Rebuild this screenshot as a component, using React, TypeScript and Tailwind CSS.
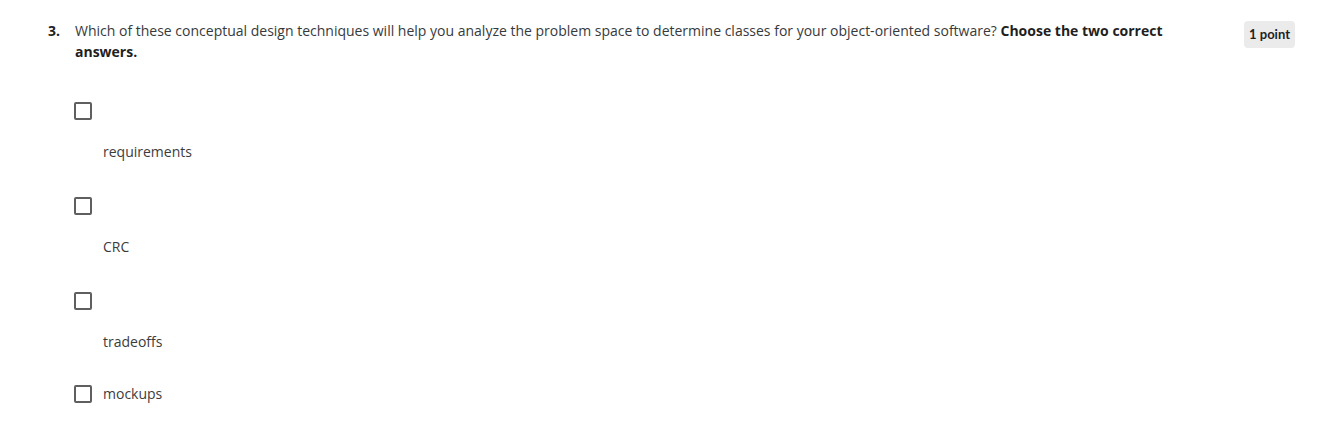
import React, { useState } from 'react';

const options = [
  { id: 'req', label: 'requirements', inline: false },
  { id: 'crc', label: 'CRC', inline: false },
  { id: 'trade', label: 'tradeoffs', inline: false },
  { id: 'mock', label: 'mockups', inline: true },
];

const Box: React.FC<{ checked: boolean; onClick: () => void }> = ({ checked, onClick }) => (
  <button
    type="button"
    onClick={onClick}
    className="w-[18px] h-[18px] shrink-0 border-2 border-[#5f5f5f] rounded-[2px] bg-white flex items-center justify-center"
  >
    {checked && <span className="w-[10px] h-[10px] bg-[#5f5f5f]" />}
  </button>
);

const App: React.FC = () => {
  const [picked, setPicked] = useState<string[]>([]);
  const toggle = (id: string) =>
    setPicked(p => (p.includes(id) ? p.filter(x => x !== id) : [...p, id]));

  return (
    <div
      className="w-full min-h-[442px] bg-white pl-[48px] pr-[33px] pt-[20px] text-[14px] leading-[21px] text-[#373a3c]"
      style={{ fontFamily: '"Open Sans", sans-serif' }}
    >
      {/* Question header */}
      <div className="flex items-start">
        <span className="w-[27px] shrink-0 font-bold text-[#1f1f1f]">3.</span>
        <p className="w-[1100px] shrink-0">
          Which of these conceptual design techniques will help you analyze the problem space to determine classes for your object-oriented software?{' '}
          <b className="font-bold text-[#1f1f1f]">Choose the two correct answers.</b>
        </p>
        <div className="ml-auto mt-[1px] h-[27px] px-[5px] flex items-center rounded-[4px] bg-[#ebebeb]">
          <span
            className="text-[13px] font-bold text-[#1f1f1f]"
            style={{ fontFamily: 'Lato, sans-serif' }}
          >
            1 point
          </span>
        </div>
      </div>

      {/* Options */}
      <div className="mt-[40px] pl-[26px] flex flex-col gap-[35px]">
        {options.map(o =>
          o.inline ? (
            <div key={o.id} className="-mt-[4px] flex items-center gap-[11px]">
              <Box checked={picked.includes(o.id)} onClick={() => toggle(o.id)} />
              <span className="text-[#3c3c3c]">{o.label}</span>
            </div>
          ) : (
            <div key={o.id} className="flex flex-col">
              <Box checked={picked.includes(o.id)} onClick={() => toggle(o.id)} />
              <span className="mt-[21px] pl-[29px] text-[#3c3c3c]">{o.label}</span>
            </div>
          )
        )}
      </div>
    </div>
  );
};

export default App;
